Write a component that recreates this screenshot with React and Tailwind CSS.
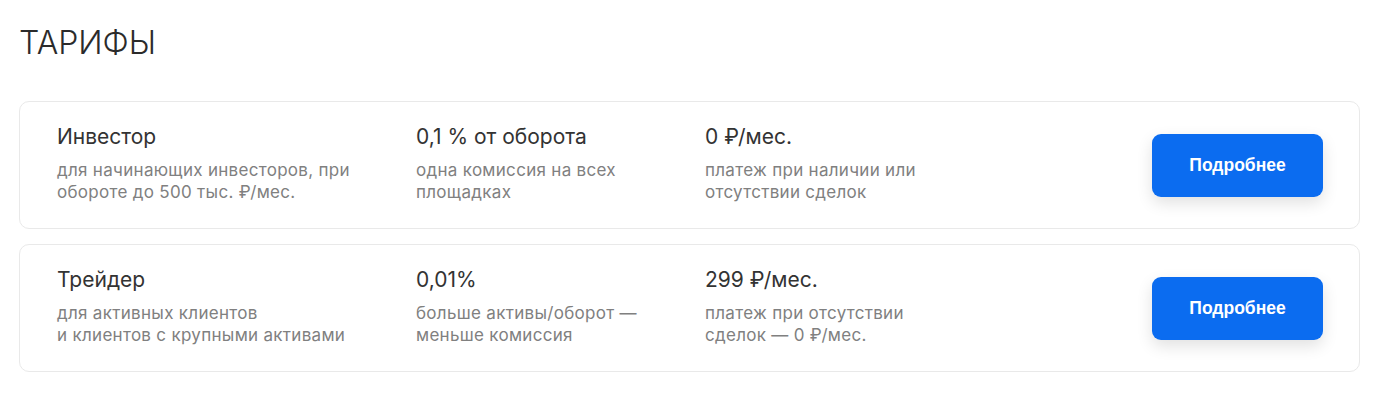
import React from 'react';

const tariffs = [
  {
    name: 'Инвестор',
    desc: ['для начинающих инвесторов, при', 'обороте до 500 тыс. ₽/мес.'],
    fee: '0,1 % от оборота',
    feeDesc: ['одна комиссия на всех', 'площадках'],
    price: '0 ₽/мес.',
    priceDesc: ['платеж при наличии или', 'отсутствии сделок'],
  },
  {
    name: 'Трейдер',
    desc: ['для активных клиентов', 'и клиентов с крупными активами'],
    fee: '0,01%',
    feeDesc: ['больше активы/оборот —', 'меньше комиссия'],
    price: '299 ₽/мес.',
    priceDesc: ['платеж при отсутствии', 'сделок — 0 ₽/мес.'],
  },
];

const Cell = ({ title, lines }) => (
  <div>
    <div className="text-[21px] leading-[28px] text-[#333333]">{title}</div>
    <div className="mt-[8px] text-[17px] leading-[22px] tracking-[0.3px] text-[#808080]">
      {lines.map((l) => (
        <div key={l}>{l}</div>
      ))}
    </div>
  </div>
);

const TariffCard = ({ t }) => (
  <div className="grid grid-cols-[359px_289px_1fr_auto] items-center rounded-[10px] border border-[#e9e9e9] bg-white pl-[37px] pr-[36px] pt-[21px] pb-[25px]">
    <Cell title={t.name} lines={t.desc} />
    <Cell title={t.fee} lines={t.feeDesc} />
    <Cell title={t.price} lines={t.priceDesc} />
    <button
      className="mt-[4px] h-[63px] w-[171px] rounded-[9px] bg-[#0b6cf0] text-[17.5px] font-bold text-white shadow-[0_6px_16px_rgba(0,0,0,0.12)]"
      style={{ fontFamily: '"Liberation Sans", Arial, sans-serif' }}
    >
      Подробнее
    </button>
  </div>
);

export default function App() {
  return (
    <div
      className="min-h-screen bg-white pl-[19px] pr-[22px] pt-[23px]"
      style={{ fontFamily: 'Inter, "Noto Sans", sans-serif' }}
    >
      <h1 className="text-[32px] font-light leading-[40px] text-[#2b2b2b]">ТАРИФЫ</h1>
      <div className="mt-[38px] flex flex-col gap-[15px]">
        {tariffs.map((t) => (
          <TariffCard key={t.name} t={t} />
        ))}
      </div>
    </div>
  );
}
